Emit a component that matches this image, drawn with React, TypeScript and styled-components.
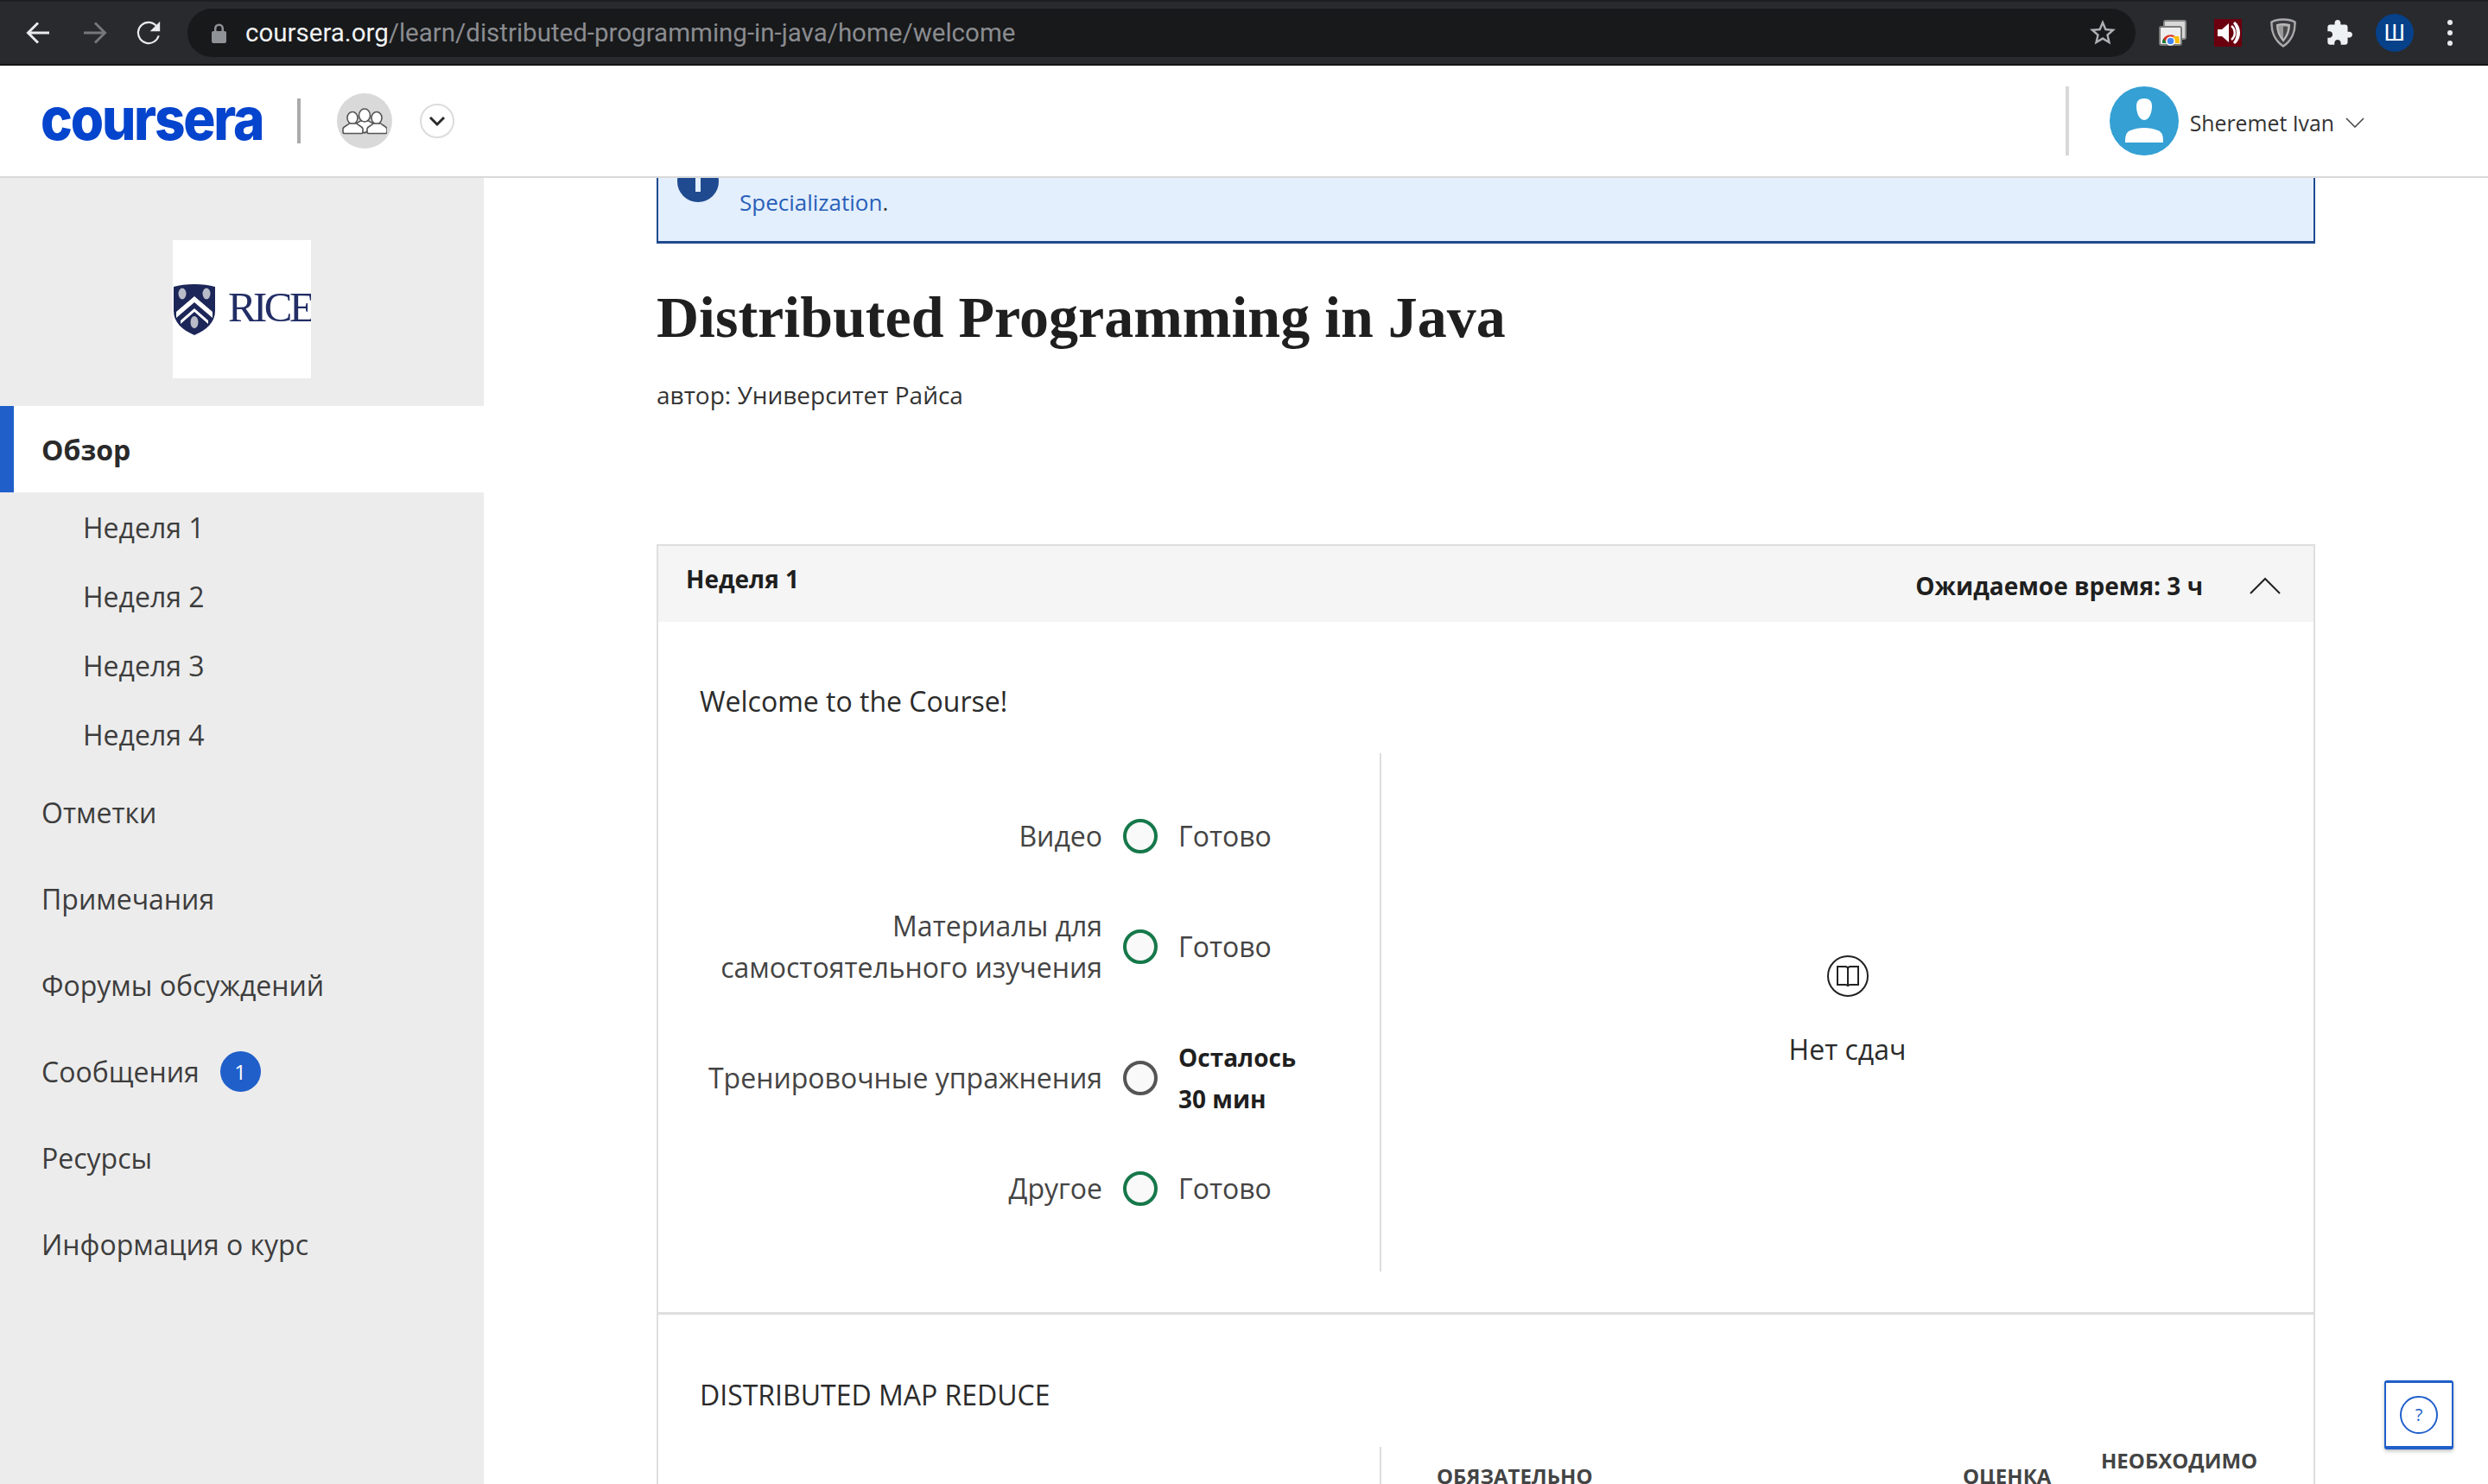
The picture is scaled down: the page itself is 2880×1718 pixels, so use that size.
import React from "react";
import styled, { createGlobalStyle } from "styled-components";

const Global = createGlobalStyle`
  html, body { margin: 0; padding: 0; background: #fff; overflow: hidden; }
  * { box-sizing: border-box; }
  body { font-family: "Open Sans", "Noto Sans", sans-serif; }
`;

const Page = styled.div`
  position: relative;
  width: 2880px;
  height: 1718px;
  overflow: hidden;
  display: flex;
  flex-direction: column;
`;

/* browser chrome */
const BrowserBar = styled.div`
  flex: none;
  height: 76px;
  background: #292a2d;
  border-top: 2px solid #1d1e20;
  border-bottom: 2px solid #131416;
  display: flex;
  align-items: center;
  padding-left: 30px;
`;
const NavIcon = styled.svg<{ $gap: number }>`
  flex: none;
  margin-right: ${(p) => p.$gap}px;
`;
const Omnibox = styled.div`
  flex: none;
  width: 2255px;
  height: 56px;
  border-radius: 28px;
  background: #18191b;
  display: flex;
  align-items: center;
  padding: 0 20px 0 28px;
  font-family: Roboto, "Liberation Sans", sans-serif;
  font-size: 29.5px;
`;
const Host = styled.span`
  color: #f1f3f4;
  margin-left: 22px;
`;
const UrlPath = styled.span`
  color: #8a8c90;
`;
const Star = styled.svg`
  margin-left: auto;
`;
const Extensions = styled.div`
  flex: none;
  padding-left: 11px;
  display: grid;
  grid-template-columns: repeat(6, 64.2px);
  justify-items: center;
  align-items: center;
`;
const ProfileDot = styled.div`
  width: 44px;
  height: 44px;
  border-radius: 50%;
  background: #06418a;
  color: #fff;
  display: flex;
  align-items: center;
  justify-content: center;
  font-size: 26px;
  font-family: Roboto, sans-serif;
`;

/* site header */
const TopHeader = styled.header`
  flex: none;
  height: 130px;
  background: #fff;
  border-bottom: 2px solid #d9d9d9;
  display: flex;
  align-items: center;
  padding-left: 47px;
`;
const Logo = styled.div`
  width: 255px;
  margin-top: -4px;
  font-family: Inter, sans-serif;
  font-weight: 800;
  font-size: 62px;
  letter-spacing: -2.2px;
  line-height: 60px;
  color: #0544cd;
  transform: scaleY(1.1);
  transform-origin: center;
`;
const LogoRule = styled.div`
  width: 4px;
  height: 52px;
  background: #ababab;
  margin: 0 42px;
`;
const GroupCircle = styled.div`
  width: 64px;
  height: 64px;
  border-radius: 50%;
  background: #d9d9d9;
  display: flex;
  align-items: center;
  justify-content: center;
`;
const SwitchCircle = styled.div`
  width: 40px;
  height: 40px;
  margin-left: 32px;
  border-radius: 50%;
  border: 2px solid #dcdcdc;
  background: #fff;
  display: flex;
  align-items: center;
  justify-content: center;
`;
const UserArea = styled.div`
  margin-left: auto;
  height: 80px;
  display: flex;
  align-items: center;
  padding-right: 143px;
`;
const UserRule = styled.div`
  width: 4px;
  height: 80px;
  background: #d8d8d8;
  margin-right: 47px;
`;
const Avatar = styled.div`
  width: 80px;
  height: 80px;
  border-radius: 50%;
  background: #34a0d4;
  display: flex;
  align-items: center;
  justify-content: center;
`;
const UserName = styled.span`
  margin-left: 13px;
  margin-top: 4px;
  font-size: 24.8px;
  color: #333;
`;
const UserChevron = styled.svg`
  margin-left: 13px;
  margin-top: 4px;
`;

/* body */
const Body = styled.div`
  flex: 1;
  min-height: 0;
  display: flex;
`;
const Sidebar = styled.nav`
  flex: none;
  width: 560px;
  background: #ececec;
`;
const SideLogo = styled.div`
  padding: 72px 0 32px 200px;
`;
const LogoBox = styled.div`
  width: 160px;
  height: 160px;
  background: #fff;
  overflow: hidden;
  display: flex;
  align-items: center;
`;
const RiceWord = styled.span`
  margin-left: 14px;
  margin-top: -5px;
  font-family: "Liberation Serif", serif;
  font-size: 49px;
  letter-spacing: -3.6px;
  color: #232e66;
`;
const ActiveItem = styled.div`
  height: 100px;
  background: #fff;
  border-left: 16px solid #205fca;
  padding-left: 32px;
  display: flex;
  align-items: center;
  font-size: 32px;
  font-weight: 700;
  color: #2a2a2a;
`;
const SubItem = styled.div`
  height: 80px;
  padding-left: 96px;
  display: flex;
  align-items: center;
  font-size: 32px;
  color: #3d3d3d;
`;
const NavItem = styled.div`
  height: 100px;
  padding-left: 48px;
  display: flex;
  align-items: center;
  font-size: 32px;
  color: #3d3d3d;
`;
const Badge = styled.span`
  width: 47px;
  height: 47px;
  margin-left: 24px;
  border-radius: 50%;
  background: #205fca;
  color: #fff;
  font-size: 24px;
  display: flex;
  align-items: center;
  justify-content: center;
`;

const Main = styled.main`
  flex: 1;
  padding-left: 200px;
  overflow: hidden;
`;
const Column = styled.div`
  width: 1920px;
`;
const Banner = styled.div`
  height: 76px;
  background: #e3effd;
  border-left: 2px solid #1f4a8f;
  border-right: 2px solid #1f4a8f;
  border-bottom: 3px solid #1f4a8f;
  overflow: hidden;
  display: flex;
  padding-left: 22px;
`;
const InfoDot = styled.div`
  flex: none;
  width: 48px;
  height: 48px;
  margin-top: -20px;
  border-radius: 50%;
  background: #1f4a8f;
  display: flex;
  justify-content: center;
  padding-top: 16px;
`;
const InfoBar = styled.div`
  width: 6px;
  height: 20px;
  background: #e3effd;
`;
const BannerText = styled.div`
  margin-left: 24px;
  padding-top: 8px;
  font-size: 26px;
  line-height: 40px;
  color: #333;
`;
const BannerLink = styled.span`
  color: #2a5fb8;
`;
const Title = styled.h1`
  margin: 40px 0 0;
  font-family: "Liberation Serif", serif;
  font-weight: 700;
  font-size: 68px;
  line-height: 90px;
  color: #1f1f1f;
`;
const Author = styled.div`
  margin-top: 25px;
  font-size: 28px;
  line-height: 40px;
  color: #333;
`;
const Card = styled.section`
  margin-top: 153px;
  border: 2px solid #dedede;
  border-bottom: none;
`;
const CardHead = styled.div`
  height: 88px;
  background: #f5f5f5;
  display: flex;
  padding: 0 38px 0 32px;
`;
const WeekName = styled.div`
  margin-top: 14px;
  font-size: 28px;
  font-weight: 700;
  line-height: 48px;
  color: #1f1f1f;
`;
const Estimate = styled.div`
  margin-left: auto;
  margin-top: 22px;
  font-size: 28px;
  font-weight: 700;
  line-height: 48px;
  color: #1f1f1f;
`;
const UpChevron = styled.svg`
  margin-left: 54px;
  margin-top: 36px;
`;
const Lesson = styled.div<{ $top: number; $bottom: number; $rule?: boolean }>`
  padding: ${(p) => p.$top}px 0 ${(p) => p.$bottom}px 48px;
  ${(p) => (p.$rule ? "border-bottom: 3px solid #dedede;" : "")}
`;
const LessonTitle = styled.div`
  font-size: 32px;
  line-height: 48px;
  color: #2b2b2b;
`;
const Split = styled.div<{ $h: number }>`
  margin-top: 36px;
  height: ${(p) => p.$h}px;
  display: flex;
`;
const Stats = styled.div`
  flex: none;
  width: 787px;
  padding-top: 72px;
  display: grid;
  grid-template-columns: 466px 40px 1fr;
  column-gap: 24px;
  row-gap: 56px;
  align-items: center;
  align-content: start;
`;
const StatLabel = styled.div`
  text-align: right;
  font-size: 32px;
  line-height: 48px;
  color: #444;
`;
const Ring = styled.div<{ $done?: boolean }>`
  width: 40px;
  height: 40px;
  border-radius: 50%;
  border: 4px solid ${(p) => (p.$done ? "#16784a" : "#555")};
  background: #f9f9f9;
`;
const StatValue = styled.div`
  font-size: 32px;
  line-height: 48px;
  color: #444;
`;
const StatStrong = styled.div`
  font-size: 28px;
  font-weight: 700;
  line-height: 48px;
  color: #1f1f1f;
`;
const Pane = styled.div`
  flex: 1;
  border-left: 2px solid #dedede;
  display: flex;
  flex-direction: column;
  align-items: center;
  justify-content: center;
  gap: 37px;
  font-size: 32px;
  line-height: 48px;
  color: #2b2b2b;
`;
const TablePane = styled.div`
  flex: 1;
  border-left: 2px solid #dedede;
  padding-left: 64px;
`;
const TableHead = styled.div`
  margin-top: -2px;
  display: grid;
  grid-template-columns: 609px 160px 1fr;
  align-items: center;
  font-size: 24px;
  font-weight: 700;
  line-height: 35px;
  color: #444;
`;
const HelpButton = styled.button`
  position: absolute;
  right: 40px;
  bottom: 40px;
  width: 80px;
  height: 80px;
  padding: 0;
  background: #fff;
  border: 2px solid #205fca;
  border-top-width: 3px;
  border-bottom-width: 4px;
  border-radius: 3px;
  box-shadow: 0 2px 4px rgba(0, 0, 0, 0.25);
  display: flex;
  align-items: center;
  justify-content: center;
`;
const HelpRing = styled.div`
  width: 44px;
  height: 44px;
  border-radius: 50%;
  border: 2px solid #205fca;
  color: #205fca;
  font-family: "Open Sans", sans-serif;
  font-size: 20px;
  display: flex;
  align-items: center;
  justify-content: center;
`;

const Arrow = ({ dir, color, gap }: { dir: "l" | "r"; color: string; gap: number }) => (
  <NavIcon $gap={gap} width="28" height="28" viewBox="0 0 28 28" fill="none" stroke={color} strokeWidth="3">
    {dir === "l" ? <path d="M27 14H3M14 2.500 2.500 14 14 25.500" /> : <path d="M1 14h24M14 2.500 25.500 14 14 25.500" />}
  </NavIcon>
);

const ChromeApps = () => (
  <svg width="32" height="30" viewBox="0 0 32 30">
    <rect x="6" y="1" width="25" height="21" rx="2" fill="#d8d8d8" stroke="#8a8a8a" strokeWidth="2" />
    <rect x="1" y="8" width="25" height="21" rx="2" fill="#eee" stroke="#7a7a7a" strokeWidth="2" />
    <path d="M4 27a9.500 9.500 0 0 1 17-6l-4 3H8l-1 3z" fill="#d93025" />
    <path d="M4 27c0-2 .4-4 1.500-5.500L9 27z" fill="#188038" />
    <path d="M16 19h7c.8 2 .9 5 .9 8h-5z" fill="#fbbc04" />
    <circle cx="13.500" cy="24.500" r="4.500" fill="#4285f4" stroke="#fff" strokeWidth="1.500" />
  </svg>
);

const Speaker = () => (
  <svg width="32" height="32" viewBox="0 0 32 32">
    <rect width="32" height="32" fill="#6b000f" />
    <path d="M4 12h5l8-7v22l-8-7H4z" fill="#fff" />
    <path d="M20 8c5 4 5 12 0 16" fill="none" stroke="#fff" strokeWidth="2.500" />
    <path d="M24 3c8 6 8 20 0 26l-2-2c5-6 5-16 0-22z" fill="#fff" />
  </svg>
);

const ShieldExt = () => (
  <svg width="30" height="34" viewBox="0 0 30 34">
    <path d="M15 1.500C20 1.500 25 2.500 28.500 4.500 29 15 25 26 15 32.500 5 26 1 15 1.500 4.500 5 2.500 10 1.500 15 1.500z" fill="#3b3b3f" stroke="#aaa" strokeWidth="2.500" />
    <path d="M8 8c4-1 10-1 14 0 0 7-2.500 13-7 18C10.500 21 8 15 8 8z" fill="#999" stroke="#bbb" strokeWidth="2" />
    <path d="M15 9.500c2 0 3.500.2 5 .5 0 5-2 10-5 14z" fill="#4a4a4d" />
  </svg>
);

const Puzzle = () => (
  <svg width="30" height="30" viewBox="1 1 22 22" fill="#eef1f3">
    <path d="M20.500 11H19V7c0-1.100-.9-2-2-2h-4V3.500C13 2.120 11.880 1 10.500 1S8 2.120 8 3.500V5H4c-1.100 0-1.990.9-1.990 2v3.800H3.500c1.490 0 2.700 1.210 2.700 2.700s-1.210 2.700-2.700 2.700H2V20c0 1.100.9 2 2 2h3.800v-1.500c0-1.490 1.210-2.700 2.700-2.700 1.490 0 2.700 1.210 2.700 2.700V22H17c1.100 0 2-.9 2-2v-4h1.500c1.380 0 2.500-1.120 2.500-2.500S21.880 11 20.500 11z" />
  </svg>
);

const Dots = () => (
  <svg width="8" height="32" viewBox="0 0 8 32" fill="#e8eaed">
    <circle cx="4" cy="4" r="3" />
    <circle cx="4" cy="16" r="3" />
    <circle cx="4" cy="28" r="3" />
  </svg>
);

const GroupIcon = () => (
  <svg width="52" height="31" viewBox="0 0 52 31" fill="#fff" stroke="#555" strokeWidth="1.600" strokeLinejoin="round">
    <path d="M21 15c-2 2-6 3-8 5l13 9 13-9c-2-2-6-3-8-5z" />
    <ellipse cx="26" cy="8.500" rx="6.500" ry="7.500" />
    <ellipse cx="12" cy="11.500" rx="6" ry="7" />
    <path d="M8 18c-1 2-6 3-7 6v4c0 1 1 1.500 2 1.500h19c1 0 2-.5 2-1.500v-4c-1-3-6-4-7-6z" />
    <ellipse cx="40" cy="11.500" rx="6" ry="7" />
    <path d="M36 18c-1 2-6 3-7 6v4c0 1 1 1.500 2 1.500h19c1 0 2-.5 2-1.500v-4c-1-3-6-4-7-6z" />
  </svg>
);

const Shield = () => (
  <svg width="50" height="60" viewBox="0 0 50 60" style={{ flex: "none" }}>
    <path d="M1 4C14 0 36 0 49 4v28c0 13-10 22-24 28C11 54 1 45 1 32z" fill="#1c2658" />
    <path d="M4 33 25 15l21 18v7L25 22 4 40z" fill="#fff" />
    <path d="M9 43 25 29l16 14v4L25 33 9 47z" fill="#fff" />
    <ellipse cx="11" cy="12" rx="4.500" ry="6.500" fill="#b9bcc8" />
    <ellipse cx="39" cy="12" rx="4.500" ry="6.500" fill="#b9bcc8" />
    <ellipse cx="25" cy="45" rx="4.500" ry="7" fill="#b9bcc8" />
  </svg>
);

const weeks = ["Неделя 1", "Неделя 2", "Неделя 3", "Неделя 4"];

export default function App() {
  return (
    <Page>
      <Global />
      <BrowserBar>
        <Arrow dir="l" color="#e8eaed" gap={38} />
        <Arrow dir="r" color="#75777b" gap={34} />
        <NavIcon $gap={31} width="28" height="28" viewBox="3.500 3.500 17 17" fill="#e8eaed">
          <path d="M17.650 6.350A7.960 7.960 0 0 0 12 4a8 8 0 1 0 7.730 10h-1.300A6.700 6.700 0 1 1 12 5.300c1.850 0 3.500.76 4.700 2L13 11h7V4z" />
        </NavIcon>
        <Omnibox>
          <svg width="17" height="24" viewBox="0 0 17 24" fill="#8f9296">
            <path d="M3 10V7a5.500 5.500 0 0 1 11 0v3h1a2 2 0 0 1 2 2v10a2 2 0 0 1-2 2H2a2 2 0 0 1-2-2V12a2 2 0 0 1 2-2zm2.500 0h6V7a3 3 0 0 0-6 0z" />
          </svg>
          <Host>coursera.org</Host>
          <UrlPath>/learn/distributed-programming-in-java/home/welcome</UrlPath>
          <Star width="36" height="36" viewBox="0 0 24 24" fill="#aeb0b3">
            <path d="M22 9.240l-7.190-.62L12 2 9.190 8.630 2 9.240l5.460 4.730L5.820 21 12 17.270 18.180 21l-1.630-7.030L22 9.240zM12 15.400l-3.760 2.270 1-4.280-3.320-2.880 4.380-.38L12 6.100l1.710 4.040 4.380.38-3.320 2.880 1 4.280L12 15.400z" />
          </Star>
        </Omnibox>
        <Extensions>
          <ChromeApps />
          <Speaker />
          <ShieldExt />
          <Puzzle />
          <ProfileDot>Ш</ProfileDot>
          <Dots />
        </Extensions>
      </BrowserBar>

      <TopHeader>
        <Logo>coursera</Logo>
        <LogoRule />
        <GroupCircle>
          <GroupIcon />
        </GroupCircle>
        <SwitchCircle>
          <svg width="20" height="14" viewBox="0 0 20 14" fill="none" stroke="#2a2a2a" strokeWidth="3">
            <path d="M2 3l8 8 8-8" />
          </svg>
        </SwitchCircle>
        <UserArea>
          <UserRule />
          <Avatar>
            <svg width="46" height="54" viewBox="0 0 46 54" fill="#fff">
              <path d="M23 1c6 0 9 3 9 9 0 7-3 16-9 16s-9-9-9-16c0-6 3-9 9-9z" />
              <path d="M1 52c0-8 1-12 6-14 5-2 10-3 16-3s11 1 16 3c5 2 6 6 6 14z" />
            </svg>
          </Avatar>
          <UserName>Sheremet Ivan</UserName>
          <UserChevron width="22" height="12" viewBox="0 0 22 12" fill="none" stroke="#444" strokeWidth="1.500">
            <path d="M1 1l10 10L21 1" />
          </UserChevron>
        </UserArea>
      </TopHeader>

      <Body>
        <Sidebar>
          <SideLogo>
            <LogoBox>
              <Shield />
              <RiceWord>RICE</RiceWord>
            </LogoBox>
          </SideLogo>
          <ActiveItem>Обзор</ActiveItem>
          {weeks.map((w) => (
            <SubItem key={w}>{w}</SubItem>
          ))}
          <NavItem>Отметки</NavItem>
          <NavItem>Примечания</NavItem>
          <NavItem>Форумы обсуждений</NavItem>
          <NavItem>
            Сообщения<Badge>1</Badge>
          </NavItem>
          <NavItem>Ресурсы</NavItem>
          <NavItem>Информация о курс</NavItem>
        </Sidebar>

        <Main>
          <Column>
            <Banner>
              <InfoDot>
                <InfoBar />
              </InfoDot>
              <BannerText>
                <BannerLink>Specialization</BannerLink>.
              </BannerText>
            </Banner>
            <Title>Distributed Programming in Java</Title>
            <Author>автор: Университет Райса</Author>
            <Card>
              <CardHead>
                <WeekName>Неделя 1</WeekName>
                <Estimate>Ожидаемое время: 3 ч</Estimate>
                <UpChevron width="36" height="20" viewBox="0 0 36 20" fill="none" stroke="#222" strokeWidth="2">
                  <path d="M1 19 18 2l17 17" />
                </UpChevron>
              </CardHead>
              <Lesson $top={68} $bottom={47} $rule>
                <LessonTitle>Welcome to the Course!</LessonTitle>
                <Split $h={600}>
                  <Stats>
                    <StatLabel>Видео</StatLabel>
                    <Ring $done />
                    <StatValue>Готово</StatValue>
                    <StatLabel>
                      Материалы для
                      <br />
                      самостоятельного изучения
                    </StatLabel>
                    <Ring $done />
                    <StatValue>Готово</StatValue>
                    <StatLabel>Тренировочные упражнения</StatLabel>
                    <Ring />
                    <StatStrong>
                      Осталось
                      <br />
                      30 мин
                    </StatStrong>
                    <StatLabel>Другое</StatLabel>
                    <Ring $done />
                    <StatValue>Готово</StatValue>
                  </Stats>
                  <Pane>
                    <svg width="48" height="48" viewBox="0 0 48 48" fill="none" stroke="#222" strokeWidth="2">
                      <ellipse cx="24" cy="24" rx="23" ry="23" />
                      <path d="M12 13h9c2 0 3 1 3 2.500C24 14 25 13 27 13h9v21H27c-2 0-3 .5-3 2 0-1.500-1-2-3-2h-9zM24 15.500V36" />
                    </svg>
                    <span>Нет сдач</span>
                  </Pane>
                </Split>
              </Lesson>
              <Lesson $top={69} $bottom={0}>
                <LessonTitle>DISTRIBUTED MAP REDUCE</LessonTitle>
                <Split $h={200}>
                  <Stats />
                  <TablePane>
                    <TableHead>
                      <span>ОБЯЗАТЕЛЬНО</span>
                      <span>ОЦЕНКА</span>
                      <span>
                        НЕОБХОДИМО
                        <br />
                        СДАТЬ
                      </span>
                    </TableHead>
                  </TablePane>
                </Split>
              </Lesson>
            </Card>
          </Column>
        </Main>
      </Body>

      <HelpButton aria-label="help">
        <HelpRing>?</HelpRing>
      </HelpButton>
    </Page>
  );
}
